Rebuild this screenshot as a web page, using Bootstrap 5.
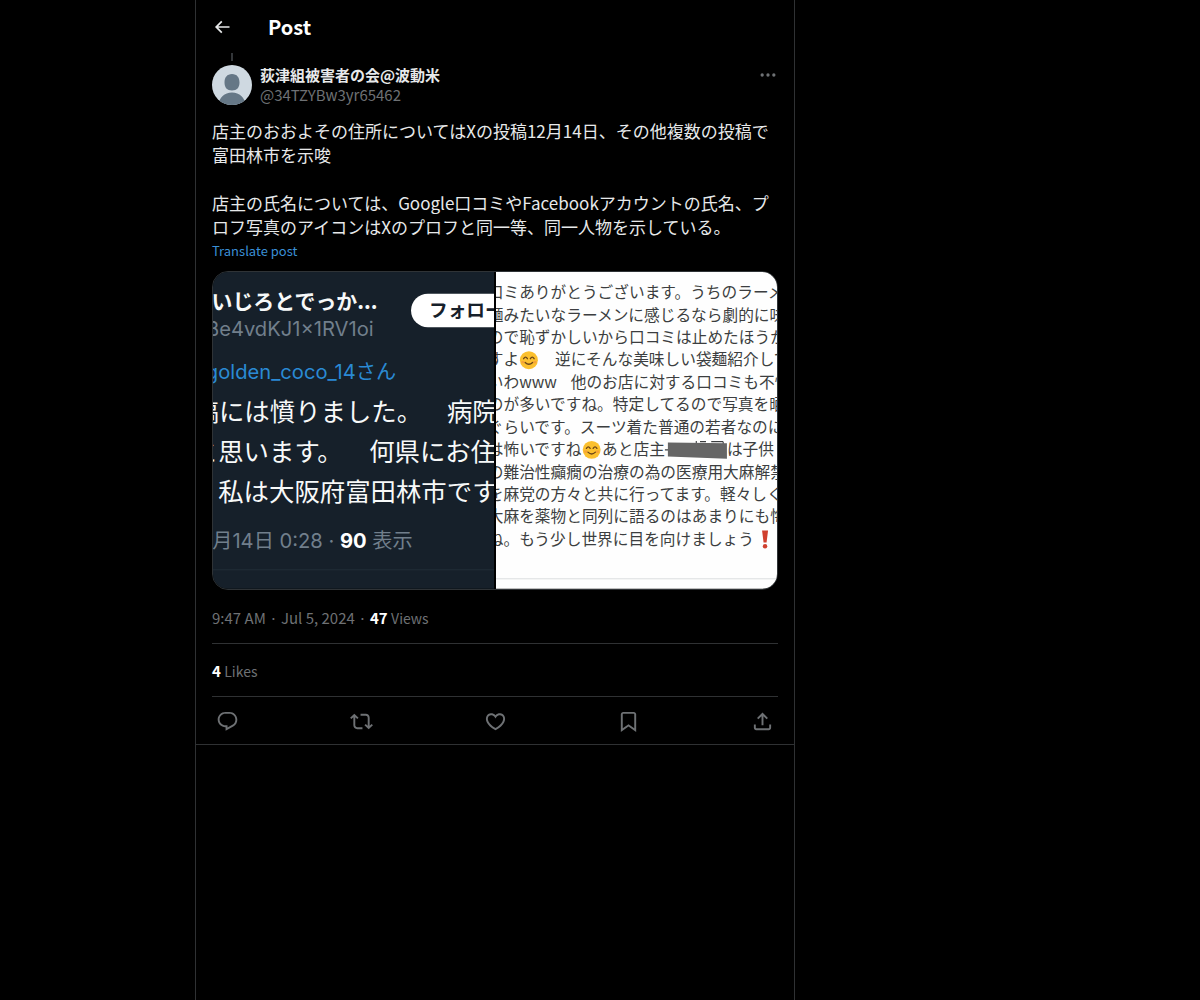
<!DOCTYPE html>
<html lang="en" data-bs-theme="dark">
<head>
<meta charset="utf-8">
<meta name="viewport" content="width=device-width, initial-scale=1">
<title>Post</title>
<link href="https://cdn.jsdelivr.net/npm/bootstrap@5.3.0/dist/css/bootstrap.min.css" rel="stylesheet">
<style>
body{background:#000;color:#e7e9ea;font-family:"Noto Sans CJK JP",sans-serif;font-size:15px;line-height:20px}
.timeline{max-width:600px;margin-left:195px;border:solid #2f3133;border-width:0 1px}
.topbar{height:53px}
.topbar h1{font-size:20px;line-height:24px}
.icon-btn{background:none;border:0;padding:0;color:inherit;line-height:0}
.icon-btn svg{fill:currentColor}
.back-col{width:56px}
.thread{width:40px;height:8px}
.thread::before{content:"";display:block;width:2px;height:8px;margin:0 auto;background:#333639}
.avatar{width:40px;height:40px}
.quiet{color:#6e7174}
.post-text{font-size:17px;line-height:24px;margin:14px 0 0}
.translate{font-size:13px;line-height:24px;color:#3a8fd6}
.media{border:1px solid #2f3336;border-radius:16px;gap:2px;margin-top:8px}
.media svg{display:block;flex:1 1 0;min-width:0}
.rule{border-bottom:1px solid #2f3133}
.date-row{padding:18px 0 15px}
.likes-row{padding:17px 0 15px}
.count-label{font-size:14px}
.actions{height:47px;padding:2px 4px 0}
.end-rule{border-bottom:1px solid #2f3133}
a{text-decoration:none;color:inherit}
.snap{font-family:Inter,"Noto Sans CJK JP",sans-serif}
.cjk{font-family:"Noto Sans CJK JP",sans-serif}
</style>
<script src="https://cdn.jsdelivr.net/npm/bootstrap@5.3.0/dist/js/bootstrap.bundle.min.js"></script>
</head>
<body>
<main class="timeline min-vh-100">
  <header class="topbar d-flex align-items-center px-3">
    <div class="back-col"><button class="icon-btn" aria-label="Back"><svg width="20" height="20" viewBox="0 0 24 24"><path d="M7.414 13l5.043 5.04-1.414 1.42L3.586 12l7.457-7.46 1.414 1.42L7.414 11H21v2H7.414z"/></svg></button></div>
    <h1 class="fw-bold mb-0">Post</h1>
  </header>
  <article class="end-rule px-3">
    <div class="thread mb-1"></div>
    <div class="d-flex gap-2">
      <a href="#" aria-label="Profile"><svg class="avatar d-block" viewBox="0 0 40 40"><defs><clipPath id="round"><circle cx="20" cy="20" r="20"/></clipPath></defs><g clip-path="url(#round)"><path fill="#cfd9e1" d="M0 0h40v40H0z"/><path fill="#657786" d="M20 9c5 0 7.500 3.500 7.500 8.500S25 25.500 20 25.500s-7.500-3-7.500-8S15 9 20 9zM6 41c1-8 6-13.500 14-13.500s13 5.500 14 13.500z"/></g></svg></a>
      <div class="flex-grow-1">
        <a href="#" class="d-block fw-bold">荻津組被害者の会@波動米</a>
        <a href="#" class="d-block quiet">@34TZYBw3yr65462</a>
      </div>
      <div class="d-flex align-items-center align-self-start"><button class="icon-btn quiet" aria-label="More"><svg width="20" height="20" viewBox="0 0 24 24"><path d="M3 12a2 2 0 1 1 4 0 2 2 0 0 1-4 0zm7 0a2 2 0 1 1 4 0 2 2 0 0 1-4 0zm7 0a2 2 0 1 1 4 0 2 2 0 0 1-4 0z"/></svg></button></div>
    </div>
    <p class="post-text" lang="ja">店主のおおよその住所についてはXの投稿12月14日、その他複数の投稿で富田林市を示唆<br><br>店主の氏名については、Google口コミやFacebookアカウントの氏名、プロフ写真のアイコンはXのプロフと同一等、同一人物を示している。</p>
    <a href="#" class="translate d-block">Translate post</a>
    <div class="media d-flex overflow-hidden" lang="ja">
      <svg class="snap" viewBox="0 0 376 424" preserveAspectRatio="xMidYMid slice" role="img" aria-label="Image">
        <path fill="#16202a" d="M0 0h376v424H0z"/>
        <text class="cjk" x="-2" y="50" font-size="28" font-weight="700" fill="#f7f9f9">いじろとでっか...</text>
        <rect x="265" y="29" width="160" height="45" rx="22.500" fill="#fff"/>
        <text x="289" y="60" font-size="25" font-weight="700" fill="#16202a">フォロー</text>
        <text x="215" y="85" text-anchor="end" font-size="27" fill="#717f8c">Be4vdKJ1x1RV1oi</text>
        <text x="245" y="143" text-anchor="end" font-size="27" fill="#2a8ad4">golden_coco_14さん</text>
        <g class="cjk" font-size="34" fill="#f7f9f9">
          <text x="-26" y="200">稿には憤りました。</text><text x="313" y="200">病院</text>
          <text x="-27" y="253">と思います。</text><text x="209" y="253">何県にお住</text>
          <text x="7" y="306">私は大阪府富田林市です</text>
        </g>
        <text x="-1" y="369" font-size="27" fill="#717f8c">月14日 0:28 · <tspan font-weight="700" fill="#fff">90</tspan> 表示</text>
        <path stroke="#26323c" d="M0 398.500h376"/>
      </svg>
      <svg class="cjk" viewBox="0 0 376 424" preserveAspectRatio="xMidYMid slice" role="img" aria-label="Image">
        <path fill="#fefefe" d="M0 0h376v424H0z"/>
        <g font-size="21" fill="#3c3e40">
          <text x="-11" y="35">口ミありがとうございます。うちのラーメ</text>
          <text x="-11" y="65">麺みたいなラーメンに感じるなら劇的に味</text>
          <text x="-11" y="95">ので恥ずかしいから口コミは止めたほうが</text>
          <text x="-11" y="125">すよ</text><text x="79" y="125">逆にそんな美味しい袋麺紹介して</text>
          <text x="-11" y="155">いわwww</text><text x="100" y="155">他のお店に対する口コミも不快</text>
          <text x="-11" y="185">のが多いですね。特定してるので写真を晒</text>
          <text x="-11" y="215">ぐらいです。スーツ着た普通の若者なのに</text>
          <text x="-11" y="245">は怖いですね</text><text x="142" y="245">あと店主</text><text x="309" y="245">は子供</text>
          <text x="-11" y="275">の難治性癲癇の治療の為の医療用大麻解禁</text>
          <text x="-11" y="305">を麻党の方々と共に行ってます。軽々しく</text>
          <text x="-11" y="335">大麻を薬物と同列に語るのはあまりにも悔</text>
          <text x="-11" y="365">ね。もう少し世界に目を向けましょう</text>
        </g>
        <defs><g id="smile"><circle r="12" fill="#fbc02f"/><path d="M-7-2q2.500-4 5 0M2-2q2.500-4 5 0M-5 3q5 5 10 0" fill="none" stroke="#6b4518" stroke-width="1.800" stroke-linecap="round"/><path fill="#f4903c" opacity=".6" d="M-10 1h4v3h-4zM6 1h4v3H6z"/></g></defs>
        <use href="#smile" x="44" y="118"/><use href="#smile" x="128" y="238"/>
        <path stroke="#3c3e40" stroke-width="1.500" fill="none" d="M226 238h6M268 226v4M273 227h8M288 227h16M304 227v4"/>
        <path fill="#666" d="M230 228l79 1v21l-79-3z"/>
        <path fill="#d0402f" d="M356 346h8l-2 16h-4z"/><circle cx="360" cy="367" r="3" fill="#d0402f"/>
        <path stroke="#d0d3d5" d="M0 410.500h376"/>
      </svg>
    </div>
    <div class="date-row rule quiet"><a href="#">9:47 AM · Jul 5, 2024</a> · <span class="fw-bold text-white">47</span> <span class="count-label">Views</span></div>
    <div class="likes-row rule quiet"><a href="#"><span class="fw-bold text-white">4</span> <span class="count-label">Likes</span></a></div>
    <div class="actions d-flex justify-content-between align-items-center quiet">
      <button class="icon-btn" aria-label="Reply"><svg width="23" height="23" viewBox="0 0 24 24"><path d="M1.751 10c0-4.420 3.584-8 8.005-8h4.366c4.490 0 8.129 3.640 8.129 8.130 0 2.960-1.607 5.680-4.196 7.110l-8.054 4.460v-3.690h-.067c-4.490.1-8.183-3.510-8.183-8.010zm8.005-6c-3.317 0-6.005 2.690-6.005 6 0 3.370 2.770 6.080 6.138 6.010l.351-.01h1.761v2.300l5.087-2.810c1.951-1.080 3.163-3.130 3.163-5.360 0-3.390-2.744-6.130-6.129-6.130H9.756z"/></svg></button>
      <button class="icon-btn" aria-label="Repost"><svg width="23" height="23" viewBox="0 0 24 24"><path d="M4.500 3.880l4.432 4.140-1.364 1.460L5.500 7.550V16c0 1.100.896 2 2 2H13v2H7.500c-2.209 0-4-1.790-4-4V7.550L1.432 9.480.068 8.020 4.500 3.880zM16.500 6H11V4h5.500c2.209 0 4 1.790 4 4v8.450l2.068-1.930 1.364 1.460-4.432 4.140-4.432-4.140 1.364-1.460 2.068 1.930V8c0-1.100-.896-2-2-2z"/></svg></button>
      <button class="icon-btn" aria-label="Like"><svg width="23" height="23" viewBox="0 0 24 24"><path d="M16.697 5.500c-1.222-.06-2.679.51-3.890 2.160l-.805 1.090-.806-1.090C9.984 6.010 8.526 5.440 7.304 5.500c-1.243.07-2.349.78-2.910 1.910-.552 1.120-.633 2.780.479 4.820 1.074 1.970 3.257 4.270 7.129 6.610 3.870-2.340 6.052-4.640 7.126-6.610 1.111-2.040 1.030-3.700.477-4.820-.561-1.130-1.666-1.840-2.908-1.910zm4.187 7.690c-1.351 2.480-4.001 5.120-8.379 7.670l-.503.3-.504-.3c-4.379-2.550-7.029-5.190-8.382-7.670-1.360-2.500-1.410-4.860-.514-6.670.887-1.790 2.647-2.910 4.601-3.010 1.651-.09 3.368.56 4.798 2.010 1.429-1.450 3.146-2.100 4.796-2.010 1.954.1 3.714 1.220 4.601 3.010.896 1.810.846 4.170-.514 6.670z"/></svg></button>
      <button class="icon-btn" aria-label="Bookmark"><svg width="23" height="23" viewBox="0 0 24 24"><path d="M4 4.500C4 3.120 5.119 2 6.500 2h11C18.881 2 20 3.120 20 4.500v18.440l-8-5.710-8 5.710V4.500zM6.500 4c-.276 0-.5.22-.5.5v14.560l6-4.290 6 4.290V4.500c0-.28-.224-.5-.5-.5h-11z"/></svg></button>
      <button class="icon-btn" aria-label="Share"><svg width="23" height="23" viewBox="0 0 24 24"><path d="M12 2.590l5.700 5.700-1.410 1.420L13 6.410V16h-2V6.410l-3.300 3.300-1.410-1.420L12 2.590zM21 15l-.02 3.510c0 1.380-1.120 2.490-2.500 2.490H5.500C4.110 21 3 19.880 3 18.500V15h2v3.500c0 .28.22.5.5.5h12.980c.28 0 .5-.22.5-.5L19 15h2z"/></svg></button>
    </div>
  </article>
</main>
</body>
</html>
